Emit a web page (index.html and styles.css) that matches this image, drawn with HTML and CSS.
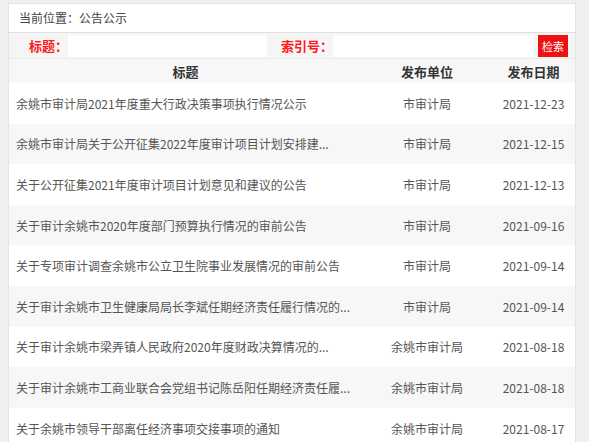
FILE: index.html
```html
<!DOCTYPE html>
<html lang="zh-CN">
<head>
<meta charset="utf-8">
<title>公告公示</title>
<link rel="stylesheet" href="styles.css">
</head>
<body>
<div class="panel">
  <div class="crumb">当前位置：公告公示</div>
  <div class="search">
    <label class="lbl lbl-title">标题：</label>
    <div class="input input-title"></div>
    <label class="lbl lbl-index">索引号：</label>
    <div class="input input-index"></div>
    <button class="btn">检索</button>
  </div>
  <div class="table">
    <div class="row head"><div class="c-title">标题</div><div class="c-unit">发布单位</div><div class="c-date">发布日期</div></div>
    <div class="row"><div class="c-title t">余姚市审计局2021年度重大行政决策事项执行情况公示</div><div class="c-unit">市审计局</div><div class="c-date">2021-12-23</div></div>
    <div class="row"><div class="c-title t">余姚市审计局关于公开征集2022年度审计项目计划安排建...</div><div class="c-unit">市审计局</div><div class="c-date">2021-12-15</div></div>
    <div class="row"><div class="c-title t">关于公开征集2021年度审计项目计划意见和建议的公告</div><div class="c-unit">市审计局</div><div class="c-date">2021-12-13</div></div>
    <div class="row"><div class="c-title t">关于审计余姚市2020年度部门预算执行情况的审前公告</div><div class="c-unit">市审计局</div><div class="c-date">2021-09-16</div></div>
    <div class="row"><div class="c-title t">关于专项审计调查余姚市公立卫生院事业发展情况的审前公告</div><div class="c-unit">市审计局</div><div class="c-date">2021-09-14</div></div>
    <div class="row"><div class="c-title t">关于审计余姚市卫生健康局局长李斌任期经济责任履行情况的...</div><div class="c-unit">市审计局</div><div class="c-date">2021-09-14</div></div>
    <div class="row"><div class="c-title t">关于审计余姚市梁弄镇人民政府2020年度财政决算情况的...</div><div class="c-unit">余姚市审计局</div><div class="c-date">2021-08-18</div></div>
    <div class="row"><div class="c-title t">关于审计余姚市工商业联合会党组书记陈岳阳任期经济责任履...</div><div class="c-unit">余姚市审计局</div><div class="c-date">2021-08-18</div></div>
    <div class="row"><div class="c-title t">关于余姚市领导干部离任经济事项交接事项的通知</div><div class="c-unit">余姚市审计局</div><div class="c-date">2021-08-17</div></div>
  </div>
</div>
</body>
</html>
```
FILE: styles.css
```css
html, body {
  margin: 0;
  padding: 0;
}
body {
  background: #f0f0f0;
  font-family: "Noto Sans CJK SC", "Microsoft YaHei", sans-serif;
  font-size: 12px;
  color: #555;
  padding: 3px 13px 0 8px;
  height: 442px;
  box-sizing: border-box;
  overflow: hidden;
}
.panel {
  background: #fff;
  border: 1px solid #e4e4e4;
  border-bottom: none;
  width: 568px;
  box-sizing: border-box;
}
.crumb {
  height: 28px;
  line-height: 27px;
  padding-left: 10px;
  color: #444;
  font-size: 12px;
}
.search {
  display: flex;
  align-items: center;
  height: 27px;
  border-top: 1px solid #e0e0e0;
  border-bottom: 1px solid #ececec;
  background: #f5f5f5;
  box-sizing: border-box;
}
.lbl {
  color: #ff1a1a;
  font-size: 13px;
  font-weight: bold;
  text-align: right;
  box-sizing: border-box;
}
.lbl-title {
  width: 59px;
}
.lbl-index {
  width: 66px;
}
.input {
  background: #fff;
  height: 22px;
}
.input-title {
  width: 199px;
}
.input-index {
  width: 200px;
}
.btn {
  margin-left: 5px;
  width: 30px;
  height: 22px;
  border: none;
  padding: 0;
  background: #ee1111;
  color: #fff;
  font-family: inherit;
  font-size: 11px;
}
.table {
  display: flex;
  flex-direction: column;
}
.row {
  display: grid;
  grid-template-columns: 353px 130px 83px;
  height: 40.6px;
  align-items: center;
}
.row:nth-child(odd) {
  background: #f7f7f7;
}
.row.head {
  height: 24px;
  font-weight: bold;
  font-size: 13px;
  color: #333;
}
.c-title {
  text-align: center;
}
.c-title.t {
  text-align: left;
  padding-left: 7px;
  white-space: nowrap;
  overflow: hidden;
}
.c-unit, .c-date {
  text-align: center;
}
```
